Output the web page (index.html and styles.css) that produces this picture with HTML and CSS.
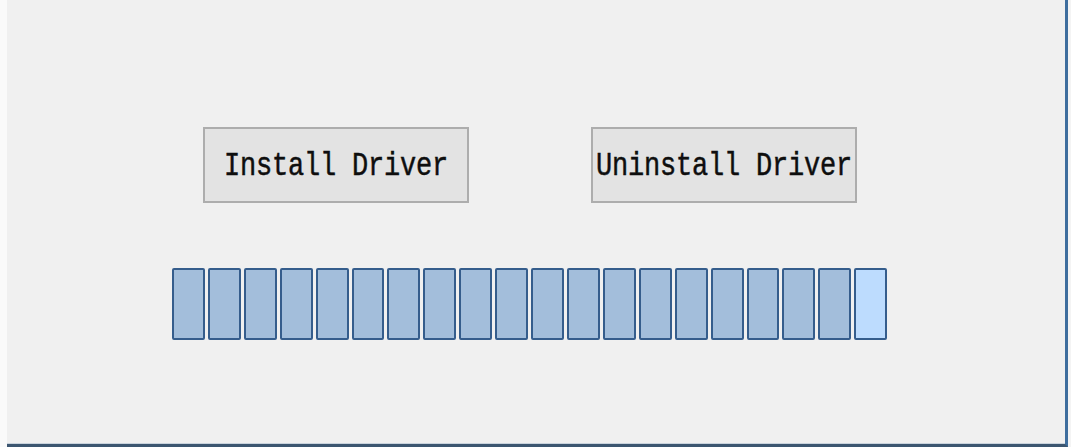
FILE: index.html
```html
<!DOCTYPE html>
<html>
<head>
<meta charset="utf-8">
<link rel="stylesheet" href="styles.css">
</head>
<body>
<div class="screen">
  <div class="left-strip"></div>
  <div class="window">
    <div class="panel">
      <div class="buttons">
        <button class="btn"><span class="label">Install Driver</span></button>
        <button class="btn"><span class="label">Uninstall Driver</span></button>
      </div>
      <div class="progress">
        <div class="seg"></div><div class="seg"></div><div class="seg"></div><div class="seg"></div>
        <div class="seg"></div><div class="seg"></div><div class="seg"></div><div class="seg"></div>
        <div class="seg"></div><div class="seg"></div><div class="seg"></div><div class="seg"></div>
        <div class="seg"></div><div class="seg"></div><div class="seg"></div><div class="seg"></div>
        <div class="seg"></div><div class="seg"></div><div class="seg"></div><div class="seg seg-active"></div>
      </div>
    </div>
  </div>
  <div class="right-strip"></div>
</div>
</body>
</html>
```
FILE: styles.css
```css
html, body {
  margin: 0;
  padding: 0;
  background: #fafafa;
}
.screen {
  display: flex;
  width: 1071px;
  height: 447px;
  overflow: hidden;
}
.left-strip {
  width: 7px;
  flex: none;
  background: #fafafa;
}
.window {
  width: 1058px;
  height: 444px;
  flex: none;
  background: #f0f0f0;
  border-right: 3px solid #3e6e9e;
  border-bottom: 3px solid #3c5670;
  box-shadow: inset 0 -1px 0 #c9d3dd;
}
.right-strip {
  width: 3px;
  flex: none;
  background: #f4f4f4;
}
.panel {
  display: flex;
  flex-direction: column;
  padding-top: 127px;
}
.buttons {
  display: flex;
  gap: 122px;
  padding-left: 196px;
}
.btn {
  width: 266px;
  height: 76px;
  box-sizing: border-box;
  border: 2px solid #adadad;
  background: #e3e3e3;
  padding: 0;
  margin: 0;
  display: flex;
  align-items: center;
  justify-content: center;
  font-family: "Liberation Mono", "DejaVu Sans Mono", monospace;
  font-size: 27px;
  color: #0e0e0e;
}
.label {
  display: inline-block;
  transform: translateY(2px) scaleY(1.2);
  letter-spacing: -0.2px;
  -webkit-text-stroke: 0.4px #0e0e0e;
}
.progress {
  display: flex;
  gap: 3px;
  margin-top: 65px;
  margin-left: 165px;
  width: 715px;
  height: 72px;
}
.seg {
  flex: 1;
  box-sizing: border-box;
  border: 2px solid #355d8c;
  border-radius: 2px;
  background: #a3bedb;
}
.seg-active {
  background: #bddcfe;
}
```
